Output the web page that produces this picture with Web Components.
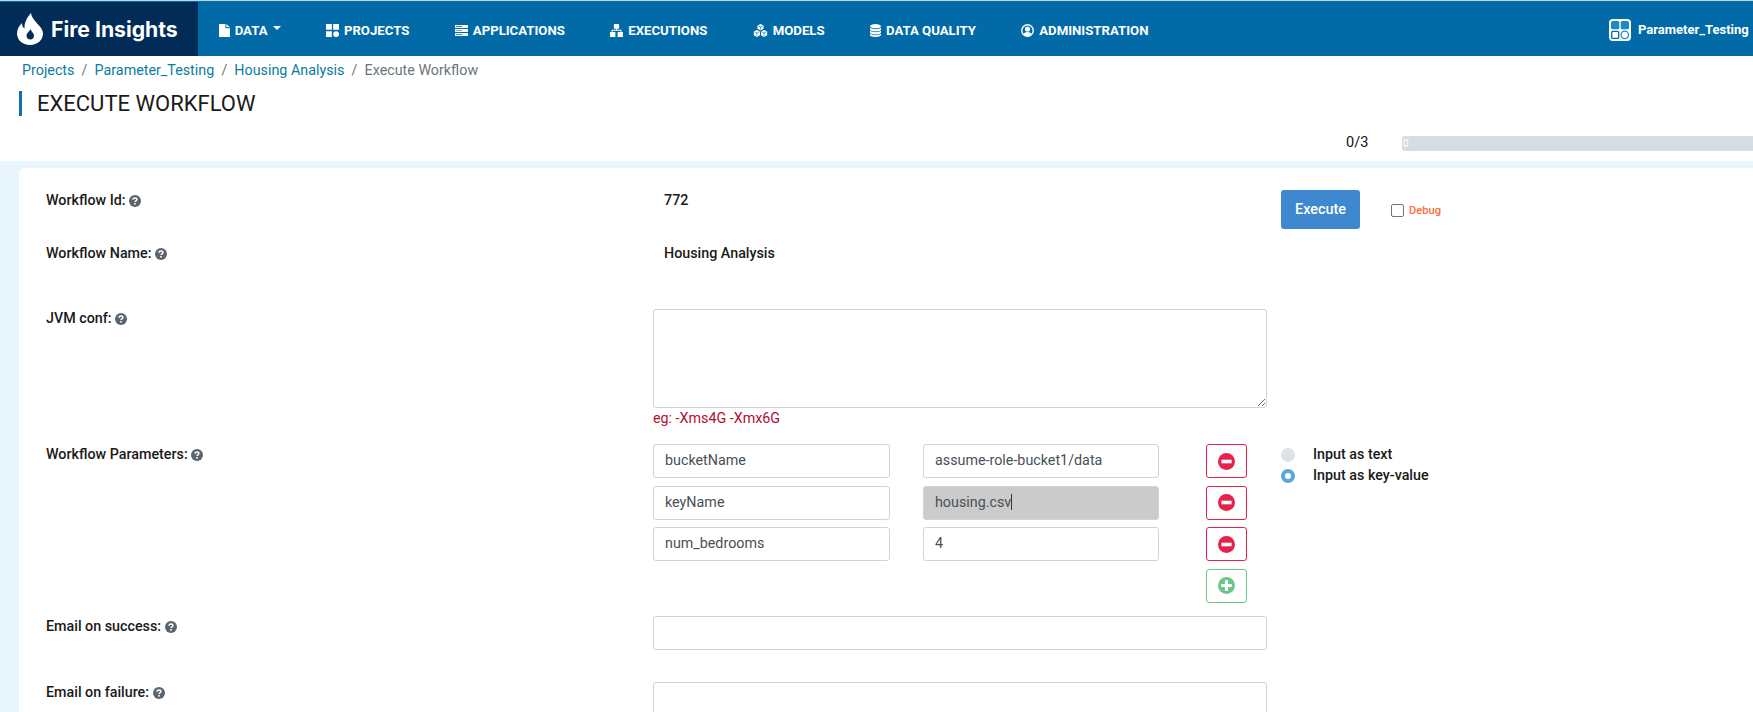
<!DOCTYPE html>
<html>
<head>
<meta charset="utf-8">
<title>Fire Insights</title>
<style>
  html, body { margin: 0; height: 712px; overflow: hidden; background: #fff; }
  body { font-family: Roboto, "Liberation Sans", sans-serif; font-size: 14px; color: #1a1a1a; }
</style>
</head>
<body>
<fi-navbar>
  <fi-nav-item icon="file" caret>DATA</fi-nav-item>
  <fi-nav-item icon="grid">PROJECTS</fi-nav-item>
  <fi-nav-item icon="server">APPLICATIONS</fi-nav-item>
  <fi-nav-item icon="sitemap">EXECUTIONS</fi-nav-item>
  <fi-nav-item icon="cubes">MODELS</fi-nav-item>
  <fi-nav-item icon="database">DATA QUALITY</fi-nav-item>
  <fi-nav-item icon="user">ADMINISTRATION</fi-nav-item>
  <span slot="project">Parameter_Testing</span>
</fi-navbar>

<fi-page-head title-text="EXECUTE WORKFLOW" done="0/3">
  <a>Projects</a><a>Parameter_Testing</a><a>Housing Analysis</a><span>Execute Workflow</span>
</fi-page-head>

<fi-card>
  <fi-form-row style="--row-h:53px" label="Workflow Id:">
    <b style="padding-left:11px;font-weight:500;font-size:14.300px;line-height:16px">772</b>
    <fi-execute slot="side"></fi-execute>
  </fi-form-row>
  <fi-form-row style="--row-h:64px" label="Workflow Name:">
    <b style="padding-left:11px;font-weight:500;font-size:14.300px;line-height:16px">Housing Analysis</b>
  </fi-form-row>
  <fi-form-row style="--row-h:135px;--label-top:1px" label="JVM conf:">
    <fi-jvm hint="eg: -Xms4G -Xmx6G"></fi-jvm>
  </fi-form-row>
  <fi-form-row style="--row-h:172px;--label-top:2px" label="Workflow Parameters:">
    <fi-param-list></fi-param-list>
    <fi-mode slot="side"></fi-mode>
  </fi-form-row>
  <fi-form-row style="--row-h:66px;--label-top:2px" label="Email on success:">
    <fi-field></fi-field>
  </fi-form-row>
  <fi-form-row style="--row-h:60px;--label-top:2px" label="Email on failure:">
    <fi-field></fi-field>
  </fi-form-row>
</fi-card>

<script>
const ICONS = {
  file: '<svg viewBox="0 0 12 14" width="11" height="13"><path fill="#fff" d="M0 0h7v4.500h5V14H0zM8 0l4 3.500H8z"/></svg>',
  grid: '<svg viewBox="0 0 14 14" width="13" height="13"><path fill="#fff" d="M0 0h6.300v6.300H0zM7.700 0H14v6.300H7.700zM0 7.700h6.300V14H0z"/><circle fill="#fff" cx="10.900" cy="10.900" r="3.200"/></svg>',
  server: '<svg viewBox="0 0 14 12" width="13" height="11"><path fill="#fff" d="M0 0h14v3.200H0zM0 4.400h14v3.200H0zM0 8.800h14V12H0z"/><path fill="#016aa7" d="M1 1.200h7v.8H1zM1 5.600h7v.8H1zM1 10h7v.8H1z"/></svg>',
  sitemap: '<svg viewBox="0 0 14 14" width="13" height="13"><path fill="#fff" d="M4.200 0h5.600v5H7.500v1.300H12.300V8.500H13.900V14H8.200V8.500h3.100V7.300H2.700v1.200h3.100V14H.1V8.500h1.600V6.300h4.800V5H4.200z"/></svg>',
  cubes: '<svg viewBox="0 0 16 14" width="15" height="13"><g fill="#fff"><path d="M8 0l3.300 1.500v3.700L8 7 4.700 5.200V1.500z"/><path d="M4.100 6.500l3.300 1.500v4.200L4.100 14 .8 12.200V8z"/><path d="M11.900 6.500L15.200 8v4.200L11.900 14l-3.300-1.800V8z"/></g><g fill="none" stroke="#016aa7" stroke-width=".7"><path d="M5.500 2L8 3.200 10.500 2M8 3.200v2.800"/><path d="M1.600 8.500l2.500 1.200 2.500-1.200M4.100 9.700v3"/><path d="M9.400 8.500l2.500 1.200 2.500-1.200M11.900 9.700v3"/></g></svg>',
  database: '<svg viewBox="0 0 12 14" width="11" height="13"><g fill="#fff"><ellipse cx="6" cy="2.300" rx="6" ry="2.300"/><path d="M0 4v1.800c0 1.200 2.700 2.200 6 2.200s6-1 6-2.200V4c-1 1-3.300 1.600-6 1.600S1 5 0 4zM0 7.300v1.900c0 1.200 2.700 2.200 6 2.200s6-1 6-2.200V7.300c-1 1-3.300 1.600-6 1.600s-5-.6-6-1.600zM0 10.500v1.300C0 13 2.700 14 6 14s6-1 6-2.200v-1.300c-1 1-3.300 1.600-6 1.600s-5-.6-6-1.600z"/></g></svg>',
  user: '<svg viewBox="0 0 14 14" width="13" height="13"><circle cx="7" cy="7" r="6.200" fill="none" stroke="#fff" stroke-width="1.500"/><circle cx="7" cy="5.500" r="2.800" fill="#fff"/><path fill="#fff" d="M2.500 11.500c.8-2 2.500-2.800 4.500-2.800s3.700.8 4.500 2.800L7 13.500z"/></svg>'
};

class FiNavbar extends HTMLElement {
  constructor() {
    super();
    this.attachShadow({ mode: "open" }).innerHTML = `
    <style>
      :host { display: flex; height: 56px; box-sizing: border-box; border-top: 1px solid #c9d3da; background: #016aa7; color: #fff; }
      .brand { width: 198px; margin-top: 1px; height: 54px; background: #002c57; display: flex; align-items: center; gap: 8px; padding-left: 17px; box-sizing: border-box; font: 700 21.200px Inter, sans-serif; white-space: nowrap; }
      nav { display: flex; align-items: center; flex: 1; padding-top: 4px; margin-left: -2px; }
      .project { display: flex; align-items: center; gap: 7px; font: 700 13px Roboto, sans-serif; padding-top: 2px; white-space: nowrap; width: 144px; box-sizing: border-box; }
    </style>
    <div class="brand">
      <svg viewBox="0 0 26 32" width="26" height="32"><path fill="#fff" fill-rule="evenodd" d="M14 0c.5 4 2.500 6.300 5.500 9.800C23 13.800 26 16.500 26 20.500 26 27 20.500 32 13 32S0 27 0 20.500C0 16.300 2 12.800 5 10c0 2.500.8 4.300 2.500 5.700C7.200 9.500 10 4.500 14 0zM13.500 16c-1 2.700-4 4-4 6.800 0 2.100 1.700 3.700 3.800 3.700s3.700-1.600 3.700-3.700c0-2.800-2.700-4-3.500-6.800z"/></svg>
      <span>Fire Insights</span>
    </div>
    <nav><slot></slot></nav>
    <div class="project">
      <svg viewBox="0 0 22 22" width="22" height="22"><rect width="22" height="22" rx="4" fill="#fff"/><rect x="2" y="2" width="8.300" height="8.300" rx="1.500" fill="#1e8ac4"/><rect x="11.700" y="2" width="8.300" height="8.300" rx="1.500" fill="#1e8ac4"/><rect x="2.700" y="12.400" width="7" height="7" rx="1" fill="#fff" stroke="#016aa7" stroke-width="1.300"/><circle cx="15.800" cy="15.900" r="3.700" fill="#fff" stroke="#1e8ac4" stroke-width="1.300"/></svg>
      <slot name="project"></slot>
    </div>`;
  }
}

class FiNavItem extends HTMLElement {
  constructor() {
    super();
    this.attachShadow({ mode: "open" });
  }
  connectedCallback() {
    const caret = this.hasAttribute("caret")
      ? '<svg viewBox="0 0 8 4" width="8" height="4" style="margin-bottom:5px"><path fill="#fff" d="M0 0h8L4 4z"/></svg>' : "";
    this.shadowRoot.innerHTML = `
    <style>
      :host { display: inline-flex; align-items: center; gap: 5px; padding: 0 22.700px; font: 700 13.200px Roboto, sans-serif; white-space: nowrap; color: #fff; }
      svg { flex: none; }
    </style>
    ${ICONS[this.getAttribute("icon")] || ""}<slot></slot>${caret}`;
  }
}

class FiPageHead extends HTMLElement {
  constructor() {
    super();
    this.attachShadow({ mode: "open" });
  }
  connectedCallback() {
    this.shadowRoot.innerHTML = `
    <style>
      :host { display: block; height: 105px; box-sizing: border-box; background: #fff; }
      .crumbs { padding: 4px 0 0 22px; height: 27px; box-sizing: border-box; }
      .title { margin: 8px 0 0 19px; height: 25px; border-left: 3px solid #0f71ab; padding-left: 15px; font: 400 22px/25px Roboto, sans-serif; color: #1a1a1a; }
      .progress { display: flex; align-items: center; margin-top: 16px; padding-left: 1346px; height: 20px; }
      .count { width: 56px; font-size: 14.500px; color: #111; }
      .bar { flex: 1; height: 15px; margin-top: 2px; background: #d5dce3; border-radius: 3px 0 0 3px; color: #fff; font-size: 10px; line-height: 15px; padding-left: 1px; }
    </style>
    <fi-breadcrumb class="crumbs"><slot></slot></fi-breadcrumb>
    <div class="title">${this.getAttribute("title-text")}</div>
    <div class="progress"><span class="count">${this.getAttribute("done")}</span><div class="bar">0</div></div>`;
    // separators live between the slotted links
    const items = [...this.children];
    items.slice(0, -1).forEach(a => a.insertAdjacentHTML("afterend", '<i style="font-style:normal;color:#6c757d;padding:0 7.200px">/</i>'));
    items.forEach(a => {
      a.style.cssText = a.tagName === "A" ? "color:#0b7c9c;font-size:14.300px" : "color:#6c757d;font-size:14.300px";
    });
  }
}

class FiBreadcrumb extends HTMLElement {
  constructor() {
    super();
    this.attachShadow({ mode: "open" }).innerHTML = `
    <style>:host { display: block; line-height: 20px; white-space: nowrap; }</style><slot></slot>`;
  }
}

class FiCard extends HTMLElement {
  constructor() {
    super();
    this.attachShadow({ mode: "open" }).innerHTML = `
    <style>
      :host { display: block; height: 551px; background: #e9f5fd; padding: 7px 0 0 19px; box-sizing: border-box; overflow: hidden; }
      .card { background: #fff; border-radius: 6px 0 0 0; height: 100%; padding: 24px 0 0 27px; box-sizing: border-box; }
    </style>
    <div class="card"><slot></slot></div>`;
  }
}

class FiHelp extends HTMLElement {
  constructor() {
    super();
    this.attachShadow({ mode: "open" }).innerHTML = `
    <style>
      :host { display: inline-block; width: 12px; height: 12px; vertical-align: -1.500px; }
      svg { display: block; }
    </style>
    <svg viewBox="0 0 12 12" width="12" height="12"><circle cx="6" cy="6" r="6" fill="#5a6570"/><path fill="none" stroke="#fff" stroke-width="1.500" d="M4.100 4.700c0-1.200.9-1.800 1.900-1.800s1.900.6 1.900 1.600c0 1.300-1.900 1.400-1.900 2.600"/><rect x="5.200" y="8" width="1.600" height="1.600" fill="#fff"/></svg>`;
  }
}

class FiFormRow extends HTMLElement {
  constructor() {
    super();
    this.attachShadow({ mode: "open" });
  }
  connectedCallback() {
    this.shadowRoot.innerHTML = `
    <style>
      :host { display: grid; grid-template-columns: 607px 614px 1fr; height: var(--row-h, 53px); }
      .label { font: 500 14.300px/16px Roboto, sans-serif; color: #1a1a1a; padding-top: var(--label-top, 0); white-space: nowrap; }
      .cell { min-width: 0; }
      .side { padding-left: 14px; }
    </style>
    <div class="label">${this.getAttribute("label")} <fi-help></fi-help></div>
    <div class="cell"><slot></slot></div>
    <div class="side"><slot name="side"></slot></div>`;
  }
}

class FiExecute extends HTMLElement {
  constructor() {
    super();
    this.attachShadow({ mode: "open" }).innerHTML = `
    <style>
      :host { display: flex; align-items: center; gap: 10px; margin-top: -2px; color: #ff6b3d; }
      button { width: 79px; height: 39px; border: 0; border-radius: 3px; background: #3d88cf; color: #fff; font: 500 14.400px Roboto, sans-serif; margin-right: 21px; padding: 0; }
      .debug { display: flex; align-items: center; gap: 5px; font: 500 11.200px Roboto, sans-serif; margin-top: 2px; }
      .box { width: 11px; height: 11px; border: 1px solid #767676; border-radius: 2px; background: #fff; }
    </style>
    <button>Execute</button>
    <span class="debug"><span class="box"></span>Debug</span>`;
  }
}

class FiJvm extends HTMLElement {
  constructor() {
    super();
    this.attachShadow({ mode: "open" });
  }
  connectedCallback() {
    this.shadowRoot.innerHTML = `
    <style>
      :host { display: block; }
      textarea { display: block; width: 614px; height: 99px; box-sizing: border-box; border: 1px solid #ced4da; border-radius: 3px; background: #fff; resize: vertical; margin: 0; outline: 0; }
      .hint { color: #b0102e; font-size: 14.300px; line-height: 16px; margin-top: 2px; }
    </style>
    <textarea></textarea>
    <div class="hint">${this.getAttribute("hint")}</div>`;
  }
}

class FiField extends HTMLElement {
  constructor() {
    super();
    this.attachShadow({ mode: "open" }).innerHTML = `
    <style>
      :host { display: flex; align-items: center; height: 34px; box-sizing: border-box; border: 1px solid #ced4da; border-radius: 3px; background: #fff; padding: 0 11px 2px; font-size: 14.300px; color: #495057; white-space: nowrap; }
      :host([active]) { background: #cbcbcb; }
      :host([active]) ::slotted(*) { border-right: 1px solid #333; }
    </style>
    <slot></slot>`;
  }
}

class FiIconBtn extends HTMLElement {
  constructor() {
    super();
    this.attachShadow({ mode: "open" });
  }
  connectedCallback() {
    const add = this.getAttribute("kind") === "add";
    const c = add ? "#6cc685" : "#e8214a";
    const sign = add ? "M6.500 3h3v3.500H13v3H9.500V13h-3V9.500H3v-3h3.500z" : "M3.200 6.300h9.600v3.400H3.200z";
    this.shadowRoot.innerHTML = `
    <style>
      :host { display: flex; align-items: center; justify-content: center; width: 41px; height: 34px; box-sizing: border-box; border: 1px solid ${c}; border-radius: 3px; background: #fff; }
    </style>
    <svg viewBox="0 0 16 16" width="17" height="17"><circle cx="8" cy="8" r="8" fill="${c}"/><path fill="#fff" d="${sign}"/></svg>`;
  }
}

class FiParamList extends HTMLElement {
  constructor() {
    super();
    const rows = [
      ["bucketName", "assume-role-bucket1/data"],
      ["keyName", "housing.csv", true],
      ["num_bedrooms", "4"]
    ];
    const row = (k, v, active) => `
      <div class="row">
        <fi-field>${k}</fi-field>
        <fi-field class="val" ${active ? "active" : ""}><span>${v}</span></fi-field>
        <fi-icon-btn></fi-icon-btn>
      </div>`;
    this.attachShadow({ mode: "open" }).innerHTML = `
    <style>
      :host { display: flex; flex-direction: column; gap: 7.500px; }
      .row { display: grid; grid-template-columns: 237px 236px 41px; column-gap: 33px; }
      .row fi-icon-btn { margin-left: 14px; grid-column: 3; }
      .val { padding-left: 11px; }
    </style>
    ${rows.map(r => row(r[0], r[1], r[2])).join("")}
    <div class="row"><fi-icon-btn kind="add"></fi-icon-btn></div>`;
  }
}

class FiMode extends HTMLElement {
  constructor() {
    super();
    this.attachShadow({ mode: "open" }).innerHTML = `
    <style>
      :host { display: grid; grid-template-columns: 14px auto; column-gap: 18px; row-gap: 6px; justify-content: start; align-items: center; font: 500 14.300px/15px Roboto, sans-serif; color: #1a1a1a; padding-top: 3px; }
      .dot { width: 14px; height: 14px; border-radius: 50%; background: #dee2e6; box-sizing: border-box; }
      .on { background: #fff; border: 4.500px solid #5ba7dc; }
    </style>
    <span class="dot"></span><span>Input as text</span>
    <span class="dot on"></span><span>Input as key-value</span>`;
  }
}

customElements.define("fi-navbar", FiNavbar);
customElements.define("fi-nav-item", FiNavItem);
customElements.define("fi-breadcrumb", FiBreadcrumb);
customElements.define("fi-page-head", FiPageHead);
customElements.define("fi-card", FiCard);
customElements.define("fi-help", FiHelp);
customElements.define("fi-form-row", FiFormRow);
customElements.define("fi-execute", FiExecute);
customElements.define("fi-jvm", FiJvm);
customElements.define("fi-field", FiField);
customElements.define("fi-icon-btn", FiIconBtn);
customElements.define("fi-param-list", FiParamList);
customElements.define("fi-mode", FiMode);
</script>
</body>
</html>
